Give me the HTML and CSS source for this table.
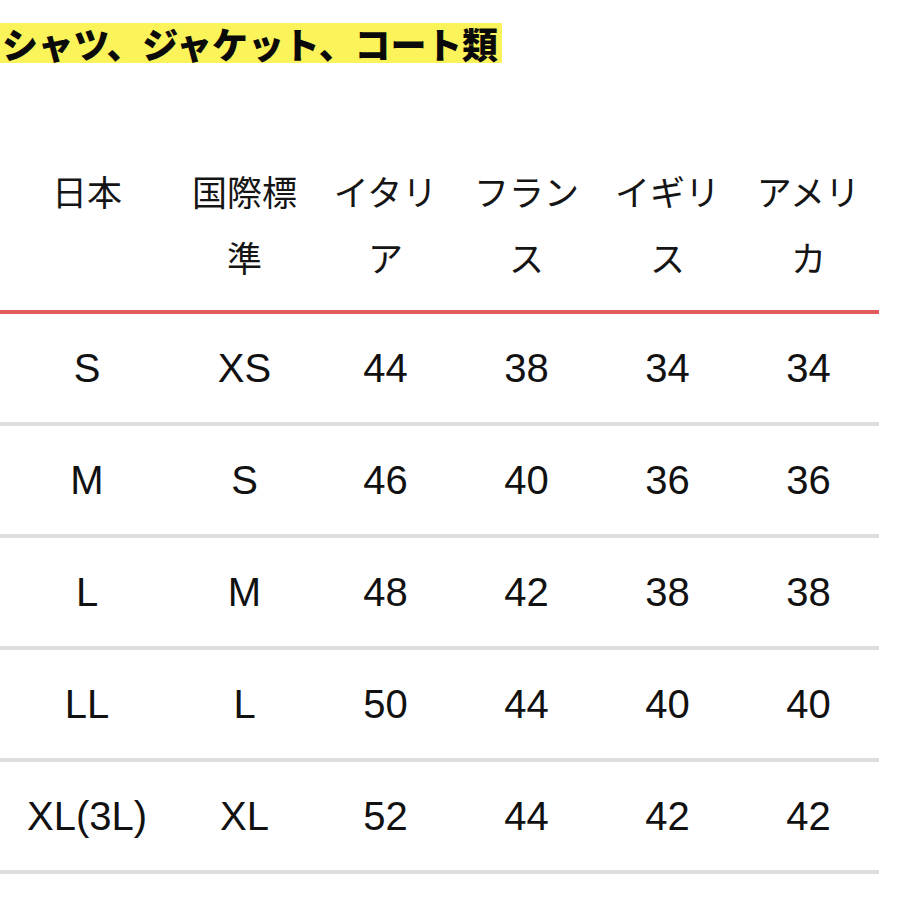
FILE: index.html
```html
<!DOCTYPE html>
<html lang="ja">
<head>
<meta charset="utf-8">
<link rel="stylesheet" href="styles.css">
</head>
<body>
<div class="page">
  <h2 class="title"><span class="mark">シャツ、ジャケット、コート類</span></h2>
  <table class="size-table">
    <colgroup>
      <col class="c-first">
      <col class="c-rest">
      <col class="c-rest">
      <col class="c-rest">
      <col class="c-rest">
      <col class="c-rest">
    </colgroup>
    <thead>
      <tr>
        <th>日本</th>
        <th>国際標準</th>
        <th>イタリア</th>
        <th>フランス</th>
        <th>イギリス</th>
        <th>アメリカ</th>
      </tr>
    </thead>
    <tbody>
      <tr><td>S</td><td>XS</td><td>44</td><td>38</td><td>34</td><td>34</td></tr>
      <tr><td>M</td><td>S</td><td>46</td><td>40</td><td>36</td><td>36</td></tr>
      <tr><td>L</td><td>M</td><td>48</td><td>42</td><td>38</td><td>38</td></tr>
      <tr><td>LL</td><td>L</td><td>50</td><td>44</td><td>40</td><td>40</td></tr>
      <tr><td>XL(3L)</td><td>XL</td><td>52</td><td>44</td><td>42</td><td>42</td></tr>
    </tbody>
  </table>
</div>
</body>
</html>
```

FILE: styles.css
```css
html, body {
  margin: 0;
  padding: 0;
  background: #ffffff;
}

.page {
  width: 900px;
  padding-top: 23px;
}

.title {
  margin: 0;
  font-family: "Noto Sans CJK JP", sans-serif;
  font-weight: 900;
  font-size: 36px;
  line-height: 40px;
  color: #0a0a0a;
}

.mark {
  display: inline-block;
  background: #fbf35a;
  padding: 0 0 0 2px;
  width: 500px;
  white-space: nowrap;
  letter-spacing: -0.2px;
}

.size-table {
  margin-top: 75px;
  width: 878px;
  table-layout: fixed;
  border-collapse: collapse;
}

.c-first { width: 174px; }
.c-rest { width: 141px; }

.size-table th {
  font-family: "Noto Sans CJK JP", sans-serif;
  font-weight: 400;
  font-size: 35px;
  line-height: 66px;
  color: #151515;
  padding: 20px 14px 20px 14px;
  text-align: center;
  vertical-align: top;
  border-bottom: 4px solid #e25a5c;
}

.size-table td {
  font-family: "Liberation Sans", Arial, sans-serif;
  font-size: 40px;
  height: 108px;
  padding: 0;
  text-align: center;
  vertical-align: middle;
  color: #111;
  border-bottom: 4px solid #dedede;
}
```
